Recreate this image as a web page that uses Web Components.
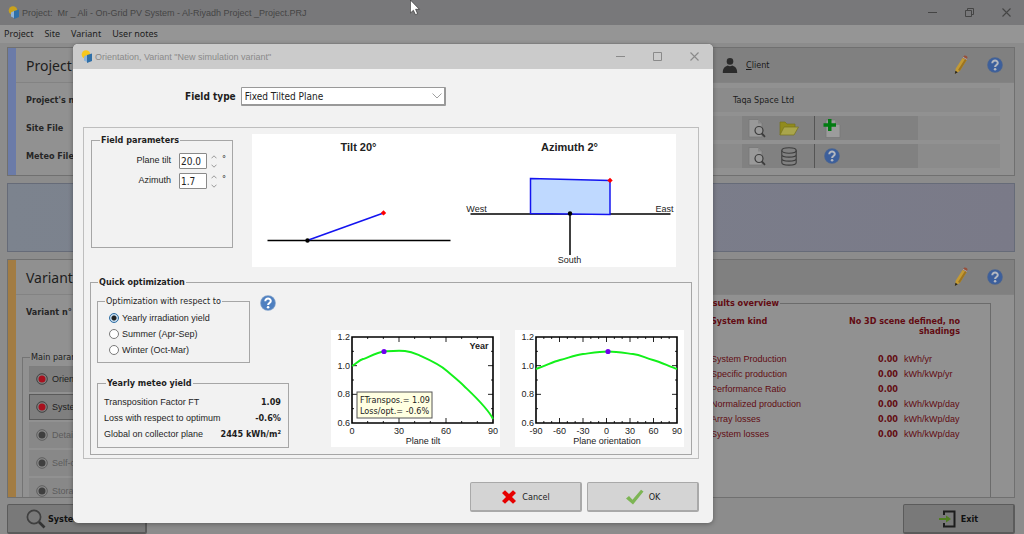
<!DOCTYPE html>
<html lang="en">
<head>
<meta charset="utf-8">
<title>Project: Mr_Ali - On-Grid PV System</title>
<style>
  body { margin: 0; background: #8c8c8c; font-family: "Liberation Sans", Arial, sans-serif; font-size: 9px; color: #1d1d1d;
    --wide: "DejaVu Sans Condensed", "DejaVu Sans", sans-serif; }
</style>
</head>
<body>
<pv-app></pv-app>

<script>
const define = (name, html, setup) => {
  const template = document.createElement('template');
  template.innerHTML = html;
  customElements.define(name, class extends HTMLElement {
    connectedCallback() {
      if (this.shadowRoot) return;
      this.attachShadow({ mode: 'open' }).append(template.content.cloneNode(true));
      if (setup) setup(this, this.shadowRoot);
    }
  });
};

/* ---------- icons ---------- */
const icons = {
  logo: ['0 0 12 13', '<circle cx="5" cy="4.500" r="4.300" fill="var(--sun,#c9a21c)"/><path d="M3 6.500 6 5v7L3 10.500z" fill="#8fb4d8"/><path d="M6 5l5-1.500v7.500L6 13z" fill="#2f6fa8"/>'],
  help: ['0 0 16 16', '<circle cx="8" cy="8" r="7.800" fill="var(--help-edge,#4c6590)"/><circle cx="8" cy="8" r="7" fill="var(--help,#3c5f9c)"/><path d="M5.300 6.300C5.200 2.700 10.900 2.800 10.800 6c0 2-2.700 2-2.700 4" fill="none" stroke="var(--mark,#b4b8c0)" stroke-width="2"/><circle cx="8.100" cy="12.300" r="1.300" fill="var(--mark,#b4b8c0)"/>'],
  pencil: ['0 0 14 20', '<path d="M.8 19l1-5.500L8.700 2.700l4 2.300L5.800 16z" fill="#c39a34"/><path d="M4 15 11 4l1.700 1L5.800 16z" fill="#9c7420"/><path d="M8.700 2.700 10.200.6c1.200-.7 3.600.7 3.300 2L12.700 5z" fill="#97503c"/><path d="M9 2.300l4 2.200" stroke="#a9a9a9"/><path d="M.8 19l.6-3.300 2.400 1.500z" fill="#222"/>'],
  person: ['0 0 16 15', '<g fill="#2b2b2b"><circle cx="8" cy="3.400" r="3.300"/><path d="M.8 15c0-5 2-6.500 5-7.500q2.200 1.600 4.400 0c3 1 5 2.500 5 7.500z"/></g>'],
  docsearch: ['0 0 18 19', '<path d="M1 .5h9l4 4V18H1z" fill="#999" stroke="#757575" stroke-width=".7"/><path d="M10 .5v4h4" fill="#888"/><circle cx="11" cy="11.500" r="4" fill="#999" stroke="#3c3c3c" stroke-width="1.200"/><path d="M13.800 14.500l3.200 3.300" stroke="#3c3c3c" stroke-width="1.800"/>'],
  folder: ['0 0 20 15', '<path d="M1 14V1h5l2 2h8v3" fill="#918b1d" stroke="#77721c" stroke-width=".7"/><path d="M1 14 5 6h14.500L15 14z" fill="#a9a54c" stroke="#77721c" stroke-width=".7"/>'],
  docplus: ['0 0 18 19', '<path d="M3 1h9l5 5v12.500H3z" fill="#9c9c9c" stroke="#777" stroke-width=".7"/><path d="M12 1v5h5" fill="#858585"/><path d="M5 0h3.500v4.300H13v3.400H8.500V12H5V7.700H.5V4.300H5z" fill="#027b12"/>'],
  database: ['0 0 18 19', '<g fill="none" stroke="#3d3d3d" stroke-width="1.100"><ellipse cx="9" cy="3.500" rx="7.200" ry="2.700"/><path d="M1.800 3.500v12c0 3.500 14.400 3.500 14.400 0v-12M1.800 7.500c0 3.500 14.400 3.500 14.400 0M1.800 11.500c0 3.500 14.400 3.500 14.400 0"/></g>'],
  led: ['0 0 12 12', '<circle cx="6" cy="6" r="5.300" fill="none" stroke="var(--ring,#3a3a3a)" stroke-width=".9"/><circle cx="6" cy="6" r="3.500" fill="var(--led,#a8101e)"/>'],
  magnifier: ['0 0 20 20', '<circle cx="8" cy="8" r="6.600" fill="none" stroke="#3f3f3f" stroke-width="1.700"/><path d="M13 13l5.500 5.500" stroke="#333" stroke-width="2.600"/>'],
  exit: ['0 0 17 18', '<path d="M5 5V1.500h10.500V16.500H5V13" fill="none" stroke="#1c1c1c" stroke-width="2"/><path d="M0 8h7V5.500L12 9l-5 3.500V10H0z" fill="#4f7d20"/>'],
  cross: ['0 0 16 16', '<path d="M4 1.200 8 5l4-3.800L15 4 11 8l4 4-3 2.800L8 11l-4 3.800L1 12l4-4-4-4z" fill="#e60000"/>'],
  check: ['0 0 19 16', '<path d="M1 9.500 4 7l3.500 3.800L16 .8l2.500 1.800L8 15.500z" fill="#7db554"/>'],
  minimize: ['0 0 9 9', '<path d="M0 4.500h9" stroke="currentColor"/>'],
  maximize: ['0 0 9 9', '<path d="M.5.500h8v8h-8z" fill="none" stroke="currentColor"/>'],
  restore: ['0 0 9 9', '<path d="M.5 2.500h6v6h-6zM2.500 2V.5h6v6H7" fill="none" stroke="currentColor"/>'],
  close: ['0 0 9 9', '<path d="M.5.500l8 8M8.500.500l-8 8" stroke="currentColor" stroke-width="1.100"/>'],
  pointer: ['0 0 12 17', '<path d="M.4 0v13l3-2.700 2 4.400 2.200-1-2-4.400H9.400z" fill="#fff" stroke="#333" stroke-width=".7"/>'],
  up: ['0 0 6 4', '<path d="M.5 3.300 3 .8l2.500 2.500" fill="none" stroke="currentColor"/>'],
  down: ['0 0 6 4', '<path d="M.5.700 3 3.200 5.500.700" fill="none" stroke="currentColor"/>'],
  chevron: ['0 0 10 6', '<path d="M.5.500 5 5 9.500.500" fill="none" stroke="currentColor"/>']
};
customElements.define('pv-icon', class extends HTMLElement {
  connectedCallback() {
    if (this.shadowRoot) return;
    const [box, body] = icons[this.getAttribute('name')];
    const [, , w, h] = box.split(' ');
    this.attachShadow({ mode: 'open' }).innerHTML =
      `<style>:host{display:inline-flex;flex:none}svg{display:block}</style>
       <svg viewBox="${box}" width="${w}" height="${h}" aria-hidden="true">${body}</svg>`;
  }
});

/* ---------- title bar shared by window and dialog ---------- */
define('pv-titlebar', `
<style>
  :host { display: flex; align-items: center; height: 25px; box-sizing: border-box; padding: 0 13px 0 8px; gap: 2px; }
  span { flex: 1; white-space: nowrap; }
  button { all: unset; display: flex; width: 9px; justify-content: center; margin-left: 26px; }
</style>
<pv-icon name="logo"></pv-icon><span><slot></slot></span>
<button aria-label="Minimize"><pv-icon name="minimize"></pv-icon></button>
<button aria-label="Maximize" class="size"></button>
<button aria-label="Close"><pv-icon name="close"></pv-icon></button>`,
(el, root) => {
  const icon = document.createElement('pv-icon');
  icon.setAttribute('name', el.hasAttribute('maximized') ? 'restore' : 'maximize');
  root.querySelector('.size').append(icon);
});

/* ---------- framed group ---------- */
define('pv-group', `
<style>
  :host { display: block; }
  fieldset { box-sizing: border-box; height: 100%; margin: 0; min-width: 0; border: 1px solid var(--line, #a6a6a6); padding: var(--pad, 0); }
  legend { padding: 0 1px; margin-left: var(--legend-x, 0); line-height: 12px; font-weight: var(--legend-weight, bold); font-family: var(--legend-font, var(--wide)); white-space: nowrap; }
</style>
<fieldset><legend><slot name="legend"></slot></legend><slot></slot></fieldset>`);

/* ---------- big push button ---------- */
define('pv-button', `
<style>
  :host { display: block; height: 30px; }
  button { box-sizing: border-box; width: 100%; height: 100%; display: flex; align-items: center; justify-content: var(--align, center); gap: var(--gap, 5px); padding: var(--pad, 0);
    font: inherit; color: inherit; background: var(--face, #d4d4d4); border: 1px solid var(--edge, #a9a9a9); border-right-width: 2px; border-bottom-width: 2px; border-radius: 2px; white-space: nowrap; }
</style>
<button type="button"><slot></slot></button>`);

/* ---------- number field ---------- */
define('pv-number', `
<style>
  :host { display: grid; grid-template-columns: 1fr 28px 6px 5px; align-items: center; column-gap: 4px; height: 16px; margin-bottom: 4px; }
  label { text-align: right; padding-right: 4px; line-height: 14px; height: 16px; }
  input { box-sizing: border-box; width: 28px; height: 16px; margin: 0; border: 1px solid #8a8a8a; border-radius: 1px; padding: 0 1px; font: 10px var(--wide); color: #222; background: #fff; }
  .spin { display: grid; gap: 5px; color: #999; }
  button { all: unset; display: flex; }
  .unit { align-self: start; padding-left: 1px; line-height: 12px; font-family: var(--wide); }
</style>
<label for="v"></label><input id="v" type="text" inputmode="decimal">
<span class="spin"><button aria-label="Increase"><pv-icon name="up"></pv-icon></button><button aria-label="Decrease"><pv-icon name="down"></pv-icon></button></span>
<span class="unit">°</span>`,
(el, root) => {
  root.querySelector('label').textContent = el.getAttribute('label');
  root.querySelector('input').value = el.getAttribute('value');
});

/* ---------- orientation sketch ---------- */
define('pv-sketch', `
<style>
  :host { display: block; background: #fff; }
  svg { display: block; width: 100%; height: 133px; }
  text { font: 9px "Liberation Sans", Arial, sans-serif; fill: #222; text-anchor: middle; }
  .h { font-size: 11px; font-weight: bold; }
</style>
<svg viewBox="0 0 423 133" role="img">
  <text class="h" x="106" y="17">Tilt 20°</text>
  <text class="h" x="317" y="17">Azimuth 2°</text>
  <path d="M15 106.500h183" stroke="#000" stroke-width="1.500"/>
  <path d="M56 106 131 79" stroke="#1414f0" stroke-width="1.600"/>
  <circle cx="55" cy="106.500" r="2.200"/><path d="M131 76.200l2.700 2.700-2.700 2.700-2.700-2.700z" fill="#f00"/>
  <path d="M218 80h200M317.500 80v41" stroke="#000" stroke-width="1.500"/>
  <path d="M278 44.500 357.500 46.500V80.500L278 79.500z" fill="#bfd9ff" stroke="#1414f0" stroke-width="1.500"/>
  <circle cx="317.500" cy="79.500" r="2.200"/><path d="M357.500 43.700l2.700 2.700-2.700 2.700-2.700-2.700z" fill="#f00"/>
  <text x="224" y="78">West</text><text x="412" y="78">East</text><text x="317" y="129">South</text>
</svg>`);

/* ---------- optimisation chart ---------- */
const charts = {
  tilt: { label: 'Plane tilt', x: [0, 30, 60, 90], minor: 9, curve: 'M21 36C25 34 28 30 32 29S46 22 53 21.500 67 20.300 74 21 83 23 89 25.700 108 34 116 41 128 51 133 56 156 77 162 89', dot: [53, 21.5] },
  orientation: { label: 'Plane orientation', x: [-90, -60, -30, 0, 30, 60, 90], minor: 18, curve: 'M21 39C31 36 37 32 45 30S60 25 68 24 85 21.500 93 21.500 110 23 118 24 130 28 138 30 155 37 162 39', dot: [93, 21.5] }
};
customElements.define('pv-chart', class extends HTMLElement {
  connectedCallback() {
    if (this.shadowRoot) return;
    const c = charts[this.getAttribute('kind')], L = 21, R = 162, T = 7, B = 93;
    let ticks = '', labels = '';
    for (let i = 1; i < c.minor; i++) {
      const x = L + (R - L) * i / c.minor, n = i % 3 ? 2 : 5;
      ticks += `M${x} ${T}v${n}M${x} ${B}v-${n}`;
    }
    for (let i = 1; i < 6; i++) {
      const y = T + (B - T) * i / 6, n = i % 2 ? 2 : 5;
      ticks += `M${L} ${y}h${n}M${R} ${y}h-${n}`;
    }
    c.x.forEach((v, i) => labels += `<text class="m" x="${L + (R - L) * i / (c.x.length - 1)}" y="104">${v}</text>`);
    ['1.2', '1.0', '0.8', '0.6'].forEach((v, i) => labels += `<text class="e" x="19" y="${10 + 28.7 * i}">${v}</text>`);
    const note = this.getAttribute('kind') === 'tilt' ? `
      <text x="148" y="19" class="m b">Year</text>
      <rect x="26" y="62" width="75" height="26" fill="#ffffe1" stroke="#555"/>
      <text class="n" x="29" y="73">FTranspos.= 1.09</text><text class="n" x="29" y="84">Loss/opt.= -0.6%</text>` : '';
    this.attachShadow({ mode: 'open' }).innerHTML = `
<style>
  :host { display: block; background: #fff; }
  svg { display: block; }
  text { font-size: 9px; fill: #222; }
  .m { text-anchor: middle; } .e { text-anchor: end; } .b { font-weight: bold; } .n { font-family: var(--wide); }
</style>
<svg width="169" height="117" viewBox="0 0 169 117" role="img">
  <path d="${ticks}" stroke="#222" fill="none"/>
  <path d="M${L} ${T}H${R}V${B}H${L}z" fill="none" stroke="#000" stroke-width="1.600"/>
  <path d="${c.curve}" fill="none" stroke="#12f01a" stroke-width="1.900"/>
  <circle cx="${c.dot[0]}" cy="${c.dot[1]}" r="2.600" fill="#7000f0"/>
  ${labels}<text class="m" x="92" y="114">${c.label}</text>${note}
</svg>`;
  }
});

/* ---------- orientation dialog ---------- */
define('pv-orientation-dialog', `
<style>
  :host { display: block; background: #f2f2f2; border-radius: 5px; overflow: hidden; color: #1e1e1e; box-shadow: 0 1px 5px #0005;
    --sun: #f7c71d; --help: #4f80c0; --help-edge: #7d9fca; --mark: #fff; }
  pv-titlebar { background: #cbcbcb; color: #8a8a8a; padding-right: 14px; }
  .type { display: flex; align-items: center; gap: 5px; padding: 18px 0 0 112px; }
  .type label { font: bold 10px var(--wide); }
  .pick { position: relative; display: flex; width: 205px; color: #a0a0a0; }
  .pick pv-icon { position: absolute; right: 4px; top: 6px; }
  select { appearance: none; box-sizing: border-box; width: 100%; height: 19px; margin: 0; padding: 0 3px; border: 1px solid #999; border-bottom-width: 2px; border-right-width: 2px; border-radius: 1px; background: #fff; font: 10px var(--wide); color: #222; }
  .frame { margin: 21px 14px 23px 10px; border: 1px solid #bebebe; padding: 6px 6px 3px; }
  .top { display: flex; gap: 19px; padding: 0 16px 0 1px; }
  .field { width: 142px; height: 114px; --pad: 7px 6px 0 8px; --legend-x: 0px; }
  pv-sketch { flex: 1; }
  .quick { margin-top: 9px; height: 179px; --pad: 7px 7px 0 6px; --legend-x: 1px; }
  .row { display: flex; justify-content: space-between; align-items: flex-end; }
  .optim { display: flex; gap: 10px; }
  .opt { width: 153px; height: 68px; --legend-weight: normal; --legend-font: inherit; --pad: 3px 0 0 11px; --legend-x: -4px; }
  .opt label { display: flex; align-items: center; gap: 3px; height: 16px; }
  input { appearance: none; box-sizing: border-box; width: 10px; height: 10px; margin: 0; border: 1px solid #7a7a7a; border-radius: 50%; background: #fff; }
  input:checked { border-color: #2d6da3; background: radial-gradient(circle, #222 0 2px, #c4dcf0 3px); }
  .yield { margin-top: 14px; width: 192px; height: 71px; --pad: 5px 10px 0 6px; --legend-x: 2px; }
  table { width: 100%; border-collapse: collapse; }
  th, td { height: 16px; padding: 0; text-align: left; font-weight: normal; white-space: nowrap; }
  td { text-align: right; font-weight: bold; font-family: var(--wide); padding-right: 4px; }
  .charts { display: flex; gap: 15px; margin-bottom: 1px; }
  .actions { display: flex; justify-content: flex-end; gap: 5px; padding: 0 14px 11px; }
  .actions pv-button { width: 112px; font-family: var(--wide); }
</style>
<pv-titlebar>Orientation, Variant "New simulation variant"</pv-titlebar>
<div class="type"><label for="type">Field type</label>
  <span class="pick"><select id="type"><option>Fixed Tilted Plane</option></select><pv-icon name="chevron"></pv-icon></span></div>
<div class="frame">
  <div class="top">
    <pv-group class="field"><span slot="legend">Field parameters</span>
      <pv-number label="Plane tilt" value="20.0"></pv-number>
      <pv-number label="Azimuth" value="1.7"></pv-number>
    </pv-group>
    <pv-sketch></pv-sketch>
  </div>
  <pv-group class="quick"><span slot="legend">Quick optimization</span>
    <div class="row">
      <div>
        <div class="optim">
          <pv-group class="opt"><span slot="legend">Optimization with respect to</span>
            <label><input type="radio" name="o" checked>Yearly irradiation yield</label>
            <label><input type="radio" name="o">Summer (Apr-Sep)</label>
            <label><input type="radio" name="o">Winter (Oct-Mar)</label>
          </pv-group>
          <pv-icon name="help"></pv-icon>
        </div>
        <pv-group class="yield"><span slot="legend">Yearly meteo yield</span>
          <table>
            <tr><th>Transposition Factor FT</th><td>1.09</td></tr>
            <tr><th>Loss with respect to optimum</th><td>-0.6%</td></tr>
            <tr><th>Global on collector plane</th><td>2445 kWh/m²</td></tr>
          </table>
        </pv-group>
      </div>
      <div class="charts"><pv-chart kind="tilt"></pv-chart><pv-chart kind="orientation"></pv-chart></div>
    </div>
  </pv-group>
</div>
<div class="actions">
  <pv-button><pv-icon name="cross"></pv-icon>Cancel</pv-button>
  <pv-button><pv-icon name="check"></pv-icon>OK</pv-button>
</div>`);

/* ---------- main panels ---------- */
define('pv-panel', `
<style>
  :host { display: flex; box-sizing: border-box; border: 1px solid #707070; overflow: hidden; background: #919191; }
  .stripe { width: 8px; background: var(--stripe); flex: none; }
  .main { flex: 1; min-width: 0; display: flex; flex-direction: column; }
  header { box-sizing: border-box; height: 35px; flex: none; display: flex; align-items: center; padding: 0 11px 0 10px; border-bottom: 1px solid #838383; background: linear-gradient(90deg, #909090 50%, #808080 60%); }
  h2 { margin: 0; font: 14px "Noto Sans", sans-serif; flex: 0 1 696px; }
  .tools { margin-left: auto; display: flex; gap: 19px; align-items: center; }
  .body { flex: 1; min-height: 0; display: flex; }
</style>
<div class="stripe"></div>
<div class="main"><header><h2><slot name="title"></slot></h2><slot name="head"></slot>
<span class="tools"><pv-icon name="pencil"></pv-icon><pv-icon name="help"></pv-icon></span></header>
<div class="body"><slot></slot></div></div>`);

define('pv-param', `
<style>
  :host { display: block; height: 26px; margin-bottom: 2px; }
  button { box-sizing: border-box; display: flex; width: 100%; height: 100%; align-items: center; gap: 4px; padding: 0 6px; font: inherit; color: inherit; background: var(--face, #7f7f7f); border: 1px solid var(--edge, #7e7e7e); }
</style>
<button type="button"><pv-icon name="led"></pv-icon><slot></slot></button>`);

define('pv-app', `
<style>
  :host { position: relative; display: flex; flex-direction: column; height: 100vh; min-height: 500px; overflow: hidden; background: #8c8c8c; }
  pv-titlebar { background: #78787a; color: #454545; flex: none; }
  nav { flex: none; display: flex; gap: 11px; height: 18px; padding: 0 4px; align-items: center; background: #959595; margin-bottom: 4px; font-family: "Noto Sans", sans-serif; }
  nav button { all: unset; line-height: 14px; }
  main { flex: 1; min-height: 0; display: flex; flex-direction: column; gap: 7px; padding: 0 9px 6px 7px; }
  .project { --stripe: #6b7ba8; height: 129px; flex: none; }
  .band { box-sizing: border-box; height: 69px; flex: none; background: linear-gradient(90deg, #7c838e, #7a7a88); border: 1px solid #666b78; }
  .variant { --stripe: #a27c43; flex: 1; min-height: 0; }
  .client { display: flex; align-items: center; gap: 8px; white-space: nowrap; color: #1a1a1a; }
  .client a { color: inherit; text-decoration: none; font-family: var(--wide); }
  .names { margin: 0; padding: 3px 0 0 10px; flex: 1; font-weight: bold; font-family: var(--wide); color: #262626; }
  .names div { height: 28px; line-height: 28px; }
  .side { width: 289px; flex: none; margin-right: 14px; padding-top: 5px; display: grid; gap: 4px; align-content: start; }
  .line { height: 24px; background: #8b8b8b; padding-left: 31px; display: flex; align-items: center; }
  .line.owner { padding-left: 22px; font-family: var(--wide); }
  .bar { box-sizing: border-box; width: 176px; height: 24px; display: flex; align-items: center; background: #818181; padding-left: 6px; gap: 14px; }
  .bar button { all: unset; display: flex; width: 18px; justify-content: center; }
  .bar i { width: 1px; height: 24px; background: #555; margin: 0 -6px 0 2px; }
  .left { width: 300px; flex: none; padding: 10px 0 0 6px; box-sizing: border-box; display: flex; flex-direction: column; }
  .left strong { padding-left: 4px; line-height: 14px; color: #262626; font-family: var(--wide); }
  .left pv-group { margin-top: 32px; flex: none; --line: #747474; --legend-weight: normal; --pad: 3px 6px 0; --legend-x: 1px; --legend-font: inherit; }
  .off { color: #5c5c5c; --led: #3f3f3f; --ring: #5a5a5a; --face: #888; --edge: #888; }
  .results { width: 301px; height: 300px; margin: 2px 23px 0 auto; flex: none; color: #620b12; --line: #6b6b6b; --pad: 1px 30px 0 20px; --legend-x: -11px; }
  table { border-collapse: collapse; width: 100%; }
  th, td { padding: 0; height: 15px; text-align: left; font-weight: normal; white-space: nowrap; vertical-align: middle; }
  thead td, thead th { font-weight: bold; font-family: var(--wide); vertical-align: top; line-height: 10px; height: 35px; padding-top: 6px; }
  thead td { text-align: right; }
  tbody td:nth-child(2) { font-weight: bold; font-family: var(--wide); text-align: right; padding-right: 6px; }
  tbody td:nth-child(3) { width: 56px; }
  footer { flex: none; display: flex; justify-content: space-between; padding: 0 9px 0 7px; font-weight: bold; font-family: var(--wide); color: #111; --face: #797979; --edge: #5b5b5b; }
  footer pv-button:first-child { width: 140px; --align: flex-start; --pad: 0 0 0 18px; --gap: 2px; }
  footer pv-button:last-child { width: 112px; --gap: 5px; }
  pv-orientation-dialog { position: absolute; top: 44px; left: 73px; width: 62.5%; }
  .pointer { position: absolute; top: 0; left: 40%; }
</style>
<pv-titlebar maximized>Project:&nbsp; Mr _ Ali - On-Grid PV System - Al-Riyadh Project _Project.PRJ</pv-titlebar>
<nav><button>Project</button><button>Site</button><button>Variant</button><button>User notes</button></nav>
<main>
  <pv-panel class="project"><span slot="title">Project</span>
    <span slot="head" class="client"><pv-icon name="person"></pv-icon><a href="#client"><u>C</u>lient</a></span>
    <div class="names"><div>Project's name</div><div>Site File</div><div>Meteo File</div></div>
    <div class="side">
      <div class="line owner">Taqa Space Ltd</div>
      <div class="line"><div class="bar">
        <button aria-label="View site"><pv-icon name="docsearch"></pv-icon></button>
        <button aria-label="Open site"><pv-icon name="folder"></pv-icon></button><i></i>
        <button aria-label="New site"><pv-icon name="docplus"></pv-icon></button></div></div>
      <div class="line"><div class="bar">
        <button aria-label="View meteo"><pv-icon name="docsearch"></pv-icon></button>
        <button aria-label="Meteo database"><pv-icon name="database"></pv-icon></button><i></i>
        <button aria-label="Help"><pv-icon name="help"></pv-icon></button></div></div>
    </div>
  </pv-panel>
  <div class="band"></div>
  <pv-panel class="variant"><span slot="title">Variant</span>
    <div class="left"><strong>Variant n°</strong>
      <pv-group><span slot="legend">Main parameters</span>
        <pv-param>Orientation</pv-param>
        <pv-param style="--edge:#5a5a5a">System</pv-param>
        <pv-param class="off">Detailed losses</pv-param>
        <pv-param class="off">Self-consumption</pv-param>
        <pv-param class="off">Storage</pv-param>
      </pv-group>
    </div>
    <pv-group class="results"><span slot="legend">Results overview</span>
      <table>
        <thead><tr><th>System kind</th><td colspan="2">No 3D scene defined, no<br>shadings</td></tr></thead>
        <tbody>
          <tr><td>System Production</td><td>0.00</td><td>kWh/yr</td></tr>
          <tr><td>Specific production</td><td>0.00</td><td>kWh/kWp/yr</td></tr>
          <tr><td>Performance Ratio</td><td>0.00</td><td></td></tr>
          <tr><td>Normalized production</td><td>0.00</td><td>kWh/kWp/day</td></tr>
          <tr><td>Array losses</td><td>0.00</td><td>kWh/kWp/day</td></tr>
          <tr><td>System losses</td><td>0.00</td><td>kWh/kWp/day</td></tr>
        </tbody>
      </table>
    </pv-group>
  </pv-panel>
</main>
<footer>
  <pv-button><pv-icon name="magnifier"></pv-icon>System overview</pv-button>
  <pv-button><pv-icon name="exit"></pv-icon>Exit</pv-button>
</footer>
<pv-orientation-dialog role="dialog" aria-label="Orientation"></pv-orientation-dialog>
<pv-icon class="pointer" name="pointer"></pv-icon>`);
</script>
</body>
</html>
